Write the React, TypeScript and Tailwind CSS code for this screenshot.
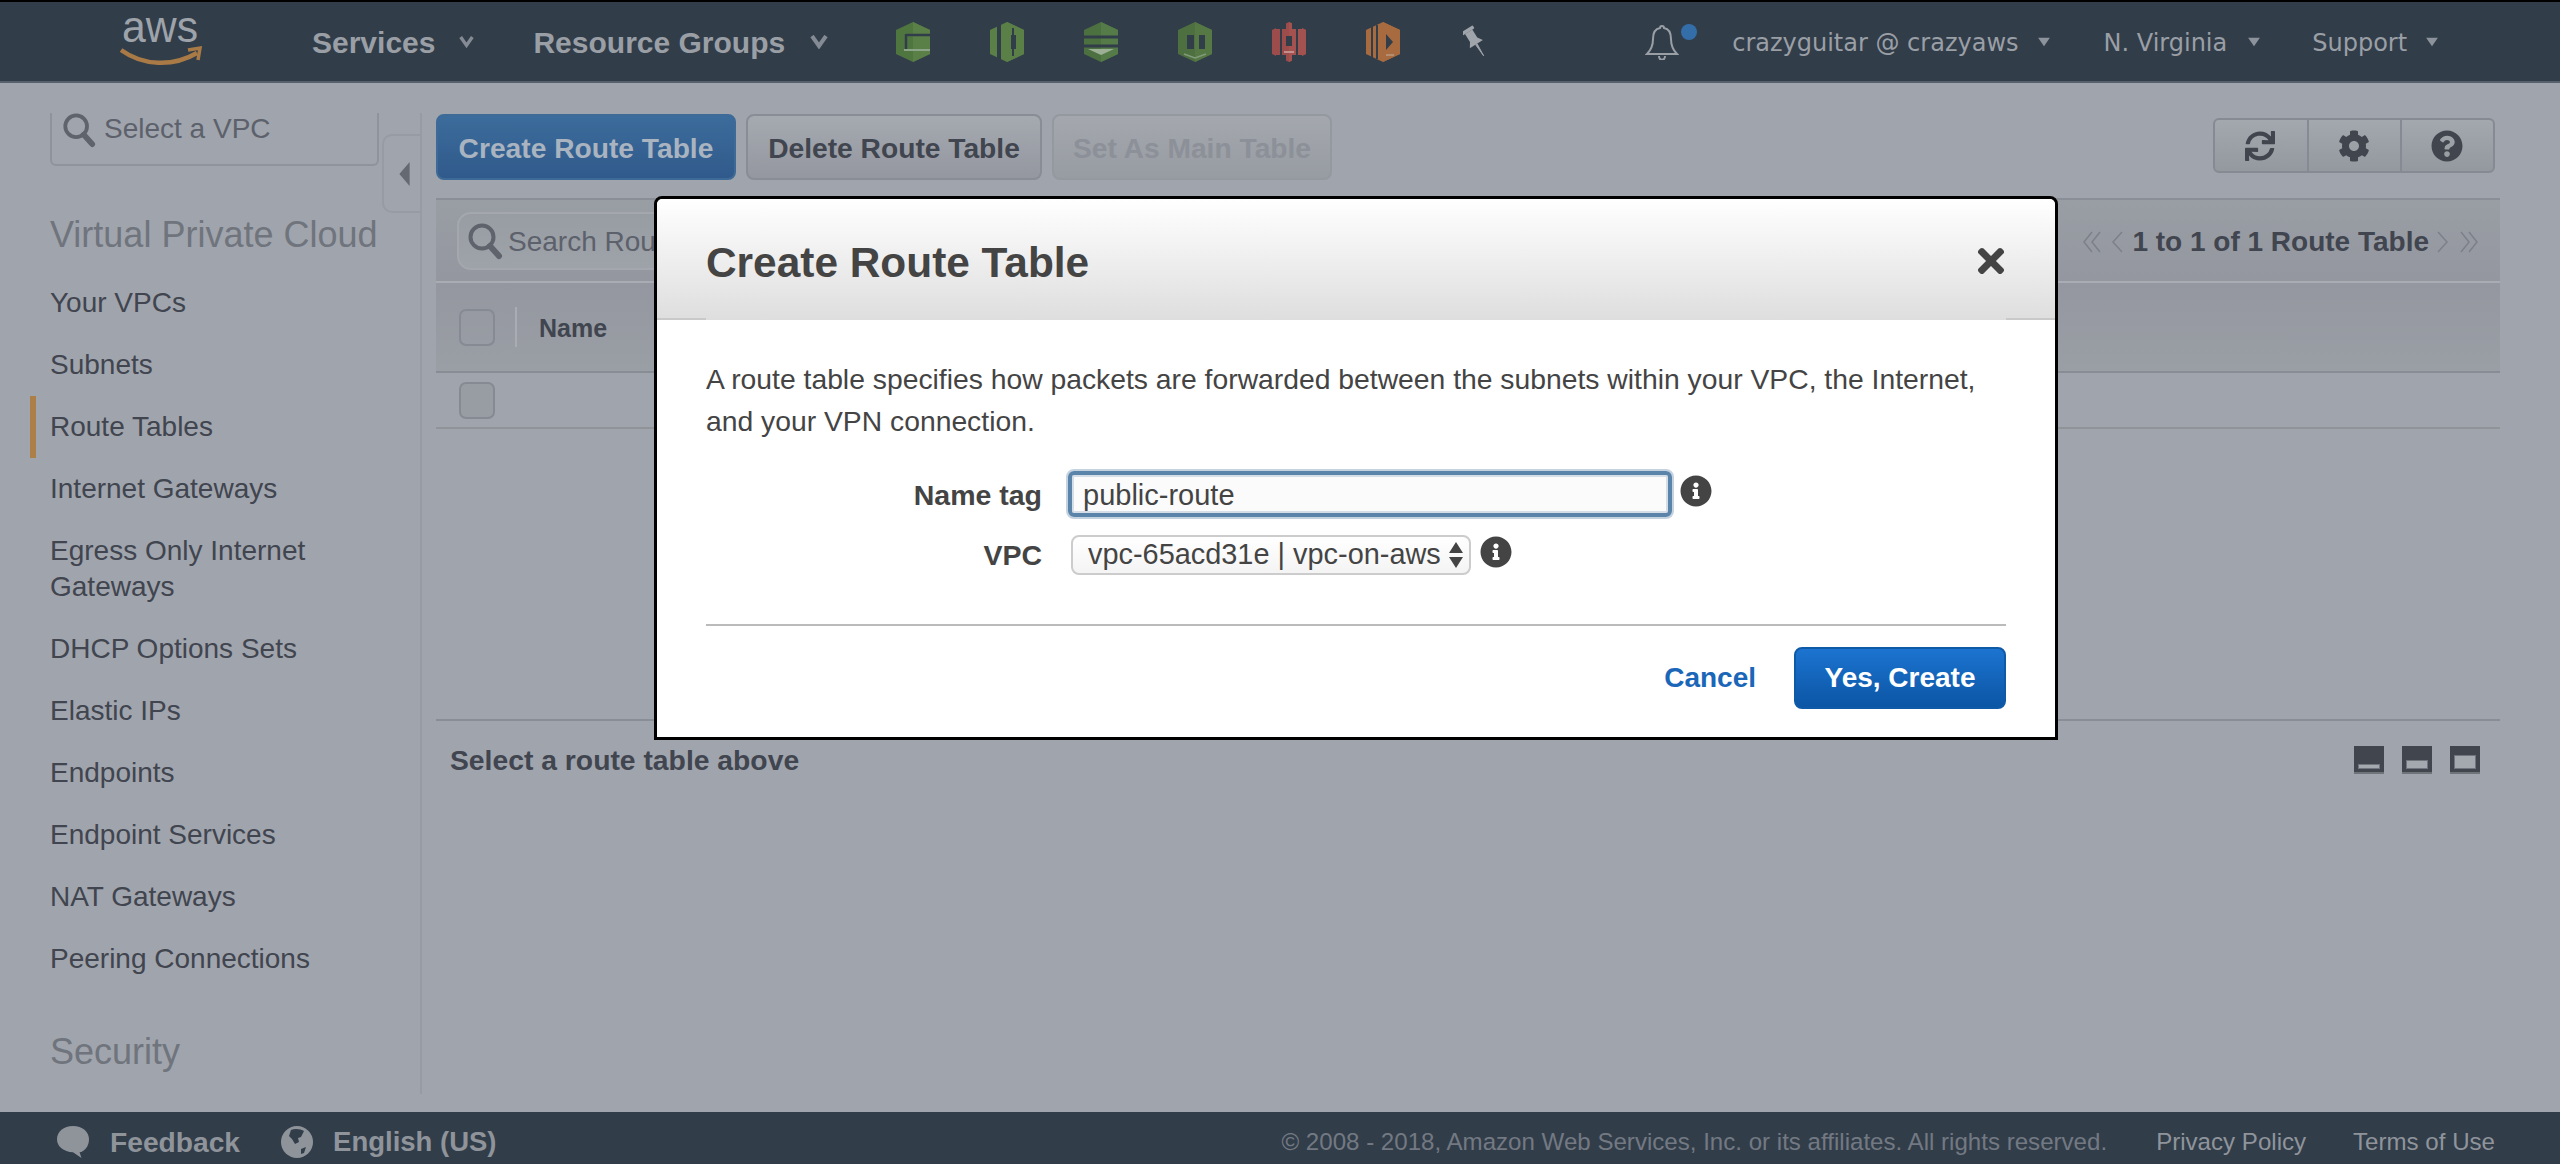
import React from "react";
import { FaSync, FaCog, FaQuestionCircle, FaInfoCircle, FaTimes } from "react-icons/fa";

const font = "font-['Liberation_Sans',Arial,sans-serif]";
const bar = "#323d4a";

function Chevron({ className = "" }: { className?: string }) {
  return (
    <svg viewBox="0 0 16 12" className={className} aria-hidden>
      <path d="M1 1h14L8 11z" fill="#8d939c" />
    </svg>
  );
}

function VChevron({ className = "" }: { className?: string }) {
  return (
    <svg viewBox="0 0 18 14" className={className} aria-hidden>
      <path d="M2 1l7 10 7-10" fill="none" stroke="#858b94" strokeWidth="4" />
    </svg>
  );
}

function Hex({ light, dark, children }: { light: string; dark: string; children?: React.ReactNode }) {
  return (
    <svg viewBox="0 0 34 40" className="w-[34px] h-[40px] blur-[0.6px]" aria-hidden>
      <path d="M17 0 34 8v24L17 40 0 32V8z" fill={dark} />
      <path d="M17 0 34 8v24L17 40z" fill={light} />
      {children}
    </svg>
  );
}

function Magnifier({ className = "" }: { className?: string }) {
  return (
    <svg viewBox="0 0 36 38" className={className} aria-hidden>
      <circle cx="15" cy="15" r="11.5" fill="none" stroke="#5e636c" strokeWidth="4" />
      <path d="M23 24l9 10" stroke="#5e636c" strokeWidth="6" strokeLinecap="round" />
    </svg>
  );
}

function PanelIcon({ h }: { h: number }) {
  return (
    <div className="relative w-[30px] h-[28px] bg-[#41464e] border-b-2 border-[#6f737a]">
      <div
        className="absolute left-[4px] right-[4px] bottom-[3px] bg-[#a4a8af] border border-[#71757d]"
        style={{ height: h }}
      />
    </div>
  );
}

const nav = [
  { label: "Your VPCs" },
  { label: "Subnets" },
  { label: "Route Tables", active: true },
  { label: "Internet Gateways" },
  { label: "Egress Only Internet Gateways" },
  { label: "DHCP Options Sets" },
  { label: "Elastic IPs" },
  { label: "Endpoints" },
  { label: "Endpoint Services" },
  { label: "NAT Gateways" },
  { label: "Peering Connections" },
];

export default function App() {
  return (
    <div className={`${font} relative w-[2560px] h-[1164px] overflow-hidden flex flex-col bg-[#a0a4ac] text-[28px] text-[#40454f]`}>
      {/* Top bar */}
      <header className="h-[83px] shrink-0 flex items-center bg-[#323d4a] border-t-2 border-t-black border-b-2 border-b-[#56616d] text-[#9a9fa6]">
        <div className="ml-[120px] w-[82px] h-[79px] shrink-0">
          <svg viewBox="0 -15 82 79" className="w-[82px] h-[79px]" aria-hidden>
            <text x="2" y="25" fontFamily="'Liberation Sans',Arial,sans-serif" fontSize="44" fill="#9ea3aa" textLength="76" lengthAdjust="spacingAndGlyphs">aws</text>
            <path d="M1 33c22 16 52 17 76 3" fill="none" stroke="#a97a45" strokeWidth="4.5" />
            <path d="M68 33l12-2-2 12" fill="none" stroke="#a97a45" strokeWidth="3.5" />
          </svg>
        </div>
        <span className="ml-[110px] font-bold text-[30px] pt-[2px]">Services</span>
        <VChevron className="ml-[24px] w-[15px] h-[12px]" />
        <span className="ml-[59px] font-bold text-[30px] pt-[2px]">Resource Groups</span>
        <VChevron className="ml-[25px] w-[18px] h-[14px]" />
        <div className="ml-[68px] flex items-center gap-[60px]">
          <Hex light="#5a7f47" dark="#507640">
            <path d="M10 13h24M10 12v15" stroke={bar} strokeWidth="2.5" />
            <path d="M8 28h26" stroke="#8ca589" strokeWidth="2" />
          </Hex>
          <Hex light="#5a7f47" dark="#5a7f47">
            <path d="M9 0v40" stroke={bar} strokeWidth="4" />
            <path d="M23 6v28" stroke={bar} strokeWidth="2" />
            <path d="M21 13h5v14h-5z" fill={bar} />
          </Hex>
          <Hex light="#557c48" dark="#4c7040">
            <path d="M0 15h34M0 24h34" stroke={bar} strokeWidth="3" />
            <path d="M4 27h26L17 33z" fill="#9cb096" />
          </Hex>
          <Hex light="#557845" dark="#4e7040">
            <path d="M9 13h7v14H9zM21 13h6v14h-6z" fill={bar} />
            <path d="M6 32l11 4 11-4" fill="none" stroke="#7f9b78" strokeWidth="1.5" />
          </Hex>
          <Hex light="#a4524f" dark="#9c4c4a">
            <path d="M9 0v7M25 0v7M9 33v7M25 33v7" stroke={bar} strokeWidth="10" />
            <path d="M9 4v32M25 4v32" stroke={bar} strokeWidth="2" />
            <path d="M14 14h6v10h-6z" fill={bar} />
            <path d="M12 30h10" stroke="#cfa6a2" strokeWidth="1.500" />
          </Hex>
          <Hex light="#a86b40" dark="#a86b40">
            <path d="M6 4v32M11 3v34" stroke={bar} strokeWidth="2" />
            <path d="M20 12l7 8-7 8z" fill={bar} />
            <path d="M20 33h8" stroke="#ba9a7f" strokeWidth="1.500" />
          </Hex>
          <svg viewBox="0 0 28 40" className="w-[24px] h-[36px] ml-[3px]" aria-hidden>
            <g transform="rotate(-32 14 20)" fill="#a0a4ab">
              <rect x="6" y="2" width="16" height="4" rx="1" />
              <path d="M9 6h10v11l4 6H5l4-6z" />
              <path d="M13 23h2l-1 16z" stroke="#a0a4ab" strokeWidth="1" />
            </g>
          </svg>
        </div>
        <div className="relative ml-[158px] w-[34px] h-[36px]">
          <svg viewBox="0 0 34 36" className="w-[34px] h-[36px]" aria-hidden>
            <path d="M17 2c1 0 2 1 2 2 6 1 7 6 7 11 0 7 2 11 6 15H2c4-4 6-8 6-15 0-5 1-10 7-11 0-1 1-2 2-2zM14 32c0 5 6 5 6 0" fill="none" stroke="#9a9fa6" strokeWidth="2" />
          </svg>
          <span className="absolute -right-[18px] top-0 w-[16px] h-[16px] rounded-full bg-[#346ea8]" />
        </div>
        <span className="ml-[53px] font-['DejaVu_Sans',sans-serif] text-[24px] pt-[3px]">crazyguitar @ crazyaws</span>
        <Chevron className="ml-[18px] w-[14px] h-[10px]" />
        <span className="ml-[53px] font-['DejaVu_Sans',sans-serif] text-[24px] pt-[3px]">N. Virginia</span>
        <Chevron className="ml-[20px] w-[14px] h-[10px]" />
        <span className="ml-[51px] font-['DejaVu_Sans',sans-serif] text-[24px] pt-[3px]">Support</span>
        <Chevron className="ml-[18px] w-[14px] h-[10px]" />
      </header>

      <div className="flex-1 min-h-0 flex">
        {/* Sidebar */}
        <aside className="mt-[30px] w-[422px] shrink-0 h-[981px] border-r-2 border-r-[#979ba3] overflow-hidden">
          <div className="flex items-start">
            <div className="ml-[50px] w-[330px] h-[53px] flex items-start gap-[8px] pl-[10px] border-2 border-t-0 border-[#8f939b] rounded-b-[6px] text-[#5c616b]">
              <Magnifier className="w-[34px] h-[36px] shrink-0 -mt-[1px]" />
              <span className="leading-[32px]">Select a VPC</span>
            </div>
            <div className="ml-[3px] mt-[21px] w-[38px] h-[79px] rounded-l-[10px] border-2 border-r-0 border-[#979ba3] flex items-center justify-center pl-[4px]">
              <svg viewBox="0 0 12 28" className="w-[11px] h-[24px]" aria-hidden>
                <path d="M12 0v28L0 14z" fill="#646972" />
              </svg>
            </div>
          </div>
          <h2 className="ml-[50px] mt-[0px] text-[36px] leading-[44px] text-[#6f747d] whitespace-nowrap">Virtual Private Cloud</h2>
          <nav className="mt-[15px]">
            {nav.map((item) => (
              <div
                key={item.label}
                className={`pl-[50px] pr-[80px] py-[13px] leading-[36px] ${item.active ? "border-l-[6px] border-l-[#ad7f48] ml-[30px] !pl-[14px]" : ""}`}
              >
                {item.label}
              </div>
            ))}
          </nav>
          <h2 className="ml-[50px] mt-[40px] text-[36px] leading-[44px] text-[#6f747d]">Security</h2>
        </aside>

        {/* Content */}
        <main className="flex-1 min-w-0 pl-[14px] pr-[60px]">
          <div className="flex items-start h-[115px] pt-[31px]">
            <div className="flex gap-[10px] text-[28.2px]">
              <div className="w-[300px] h-[66px] pt-[2px] rounded-[8px] border-2 border-[#3d6a96] bg-gradient-to-b from-[#3c6c9b] to-[#305a8b] text-[#a9b4c0] font-bold flex items-center justify-center">Create Route Table</div>
              <div className="w-[296px] h-[66px] pt-[2px] rounded-[8px] border-2 border-[#898d95] bg-gradient-to-b from-[#a5a9b0] to-[#94979f] font-bold flex items-center justify-center">Delete Route Table</div>
              <div className="w-[280px] h-[66px] pt-[2px] rounded-[8px] border-2 border-[#94989f] bg-gradient-to-b from-[#a4a7ae] to-[#979ba2] text-[#8c9098] font-bold flex items-center justify-center">Set As Main Table</div>
            </div>
            <div className="ml-auto mr-[5px] mt-[4px] w-[282px] h-[55px] flex rounded-[6px] border-2 border-[#868a92] bg-gradient-to-b from-[#a3a7ae] to-[#94989f] text-[#41464e]">
              <div className="flex-1 flex items-center justify-center border-r-2 border-[#868a92] pr-[3px]"><FaSync size={30} /></div>
              <div className="flex-1 flex items-center justify-center border-r-2 border-[#868a92] pr-[2px]"><FaCog size={32} /></div>
              <div className="flex-1 flex items-center justify-center pr-[2px]"><FaQuestionCircle size={32} /></div>
            </div>
          </div>

          <div className="h-[85px] border-t-2 border-t-[#8a8e96] border-b-2 border-b-[#a9adb3] bg-gradient-to-b from-[#999da4] to-[#94979f] flex items-center pl-[21px] pr-[21px]">
            <div className="w-[560px] h-[58px] rounded-[14px] border-2 border-[#a4a8ae] bg-gradient-to-b from-[#989ca3] to-[#9ea2a9] flex items-center pl-[8px] gap-[5px] text-[#5c616b] whitespace-nowrap overflow-hidden">
              <Magnifier className="w-[36px] h-[38px] shrink-0" />
              <span className="pt-[2px]">Search Route Tables</span>
            </div>
            <div className="ml-auto flex items-center pt-[2px]">
              <svg viewBox="0 0 20 22" className="w-[20px] h-[22px]" aria-hidden><path d="M10 1 2 11l8 10M18 1l-8 10 8 10" fill="none" stroke="#7c8089" strokeWidth="1.500" /></svg>
              <svg viewBox="0 0 12 22" className="ml-[9px] w-[12px] h-[22px]" aria-hidden><path d="M11 1 2 11l9 10" fill="none" stroke="#7c8089" strokeWidth="1.500" /></svg>
              <span className="ml-[9px] font-bold">1 to 1 of 1 Route Table</span>
              <svg viewBox="0 0 12 22" className="ml-[8px] w-[12px] h-[22px]" aria-hidden><path d="M1 1l9 10-9 10" fill="none" stroke="#7c8089" strokeWidth="1.500" /></svg>
              <svg viewBox="0 0 20 22" className="ml-[10px] w-[20px] h-[22px]" aria-hidden><path d="M2 1l8 10-8 10M10 1l8 10-8 10" fill="none" stroke="#7c8089" strokeWidth="1.500" /></svg>
            </div>
          </div>

          <div className="h-[90px] border-b-2 border-b-[#888c94] bg-gradient-to-b from-[#94979f] to-[#9a9ea5] flex items-center pl-[23px] font-bold text-[25px]">
            <div className="w-[36px] h-[37px] rounded-[7px] border-2 border-[#868a92]" />
            <div className="ml-[20px] w-[2px] h-[40px] bg-[#a9adb3]" />
            <span className="ml-[22px] pt-[3px]">Name</span>
          </div>
          <div className="h-[56px] border-b-2 border-b-[#909499] flex items-center pl-[23px]">
            <div className="w-[36px] h-[37px] rounded-[7px] border-2 border-[#868a92] bg-[#989ca3]" />
          </div>

          <div className="mt-[290px] border-t-2 border-t-[#898d95] flex items-center justify-between pl-[14px] pr-[20px] pt-[18px]">
            <span className="font-bold text-[28.3px]">Select a route table above</span>
            <div className="flex gap-[18px]">
              <PanelIcon h={5} />
              <PanelIcon h={9} />
              <PanelIcon h={14} />
            </div>
          </div>
        </main>
      </div>

      {/* Footer */}
      <footer className="h-[52px] shrink-0 bg-[#323d4a] flex items-center pt-[8px] text-[#8f949b]">
        <svg viewBox="0 0 34 34" className="ml-[56px] w-[34px] h-[32px]" aria-hidden>
          <path d="M17 0c10 0 17 6 17 14s-5 13-10 14l2 6-9-6C7 27 0 22 0 14S7 0 17 0z" fill="#8f949b" />
        </svg>
        <span className="ml-[20px] font-bold text-[28.2px]">Feedback</span>
        <svg viewBox="0 0 32 32" className="ml-[41px] w-[32px] h-[32px]" aria-hidden>
          <circle cx="16" cy="16" r="16" fill="#8f949b" />
          <path d="M10 4c4-2 10-1 13 1l-3 6-3 1 1 4-4 2-3-5-3-3zM20 23l5-2-2 6-3 1z" fill="#323d4a" />
        </svg>
        <span className="ml-[20px] font-bold text-[27.5px]">English (US)</span>
        <span className="ml-auto text-[24.1px] text-[#737982]">© 2008 - 2018, Amazon Web Services, Inc. or its affiliates. All rights reserved.</span>
        <span className="ml-[49px] text-[24.1px]">Privacy Policy</span>
        <span className="ml-[47px] mr-[65px] text-[24.1px]">Terms of Use</span>
      </footer>

      {/* Modal */}
      <div className="absolute left-[654px] top-[196px] w-[1404px] h-[544px] bg-white border-[3px] border-black rounded-t-[8px] text-[#444]">
        <div className="relative h-[121px] rounded-t-[6px] bg-gradient-to-b from-white to-[#dedede] flex items-center justify-between pl-[49px] pr-[45px]">
          <h1 className="font-bold text-[42.4px] mt-[6px]">Create Route Table</h1>
          <FaTimes size={38} className="mt-[3px] text-[#444]" />
          <span className="absolute left-0 bottom-0 w-[49px] h-[2px] bg-[#c9c9c9]" />
          <span className="absolute right-0 bottom-0 w-[49px] h-[2px] bg-[#c9c9c9]" />
        </div>
        <div className="px-[49px]">
          <p className="mt-[38px] leading-[42px] pr-[10px] text-[28.3px]">A route table specifies how packets are forwarded between the subnets within your VPC, the Internet, and your VPN connection.</p>
          <div className="mt-[27px] flex items-center h-[50px]">
            <label className="w-[336px] text-right font-bold text-[28.5px] pt-[3px]">Name tag</label>
            <div className="ml-[24px] w-[608px] h-[50px] rounded-[8px] border-[2px] border-[#c5d3e1] bg-[#fbfbfb] flex">
              <div className="flex-1 border-[4px] border-[#5b84ab] rounded-[6px] shadow-[inset_0_0_0_2px_#d5dde6] flex items-center pl-[11px] pt-[3px] text-[29px] text-[#444]">public-route</div>
            </div>
            <FaInfoCircle size={32} className="ml-[6px] -mt-[6px] text-[#444]" />
          </div>
          <div className="mt-[16px] flex items-center h-[40px]">
            <label className="w-[336px] text-right font-bold text-[28.5px]">VPC</label>
            <div className="ml-[29px] w-[400px] h-[40px] rounded-[8px] border-2 border-[#ccc] bg-gradient-to-b from-white to-[#f4f4f4] flex items-center justify-between pl-[15px] pr-[6px] text-[28.9px] whitespace-nowrap">
              <span>vpc-65acd31e | vpc-on-aws</span>
              <svg viewBox="0 0 14 26" className="w-[14px] h-[26px] shrink-0" aria-hidden>
                <path d="M7 0l7 11H0zM7 26l-7-11h14z" fill="#444" />
              </svg>
            </div>
            <FaInfoCircle size={32} className="ml-[9px] -mt-[6px] text-[#444]" />
          </div>
          <div className="mt-[49px] h-[2px] bg-[#bbb]" />
          <div className="mt-[21px] flex items-center justify-end">
            <span className="font-bold text-[#1a66b8]">Cancel</span>
            <div className="ml-[38px] w-[212px] h-[62px] rounded-[8px] border-2 border-[#0f5aa8] bg-gradient-to-b from-[#1c74d0] to-[#0b55a5] text-white font-bold flex items-center justify-center">Yes, Create</div>
          </div>
        </div>
      </div>
    </div>
  );
}
